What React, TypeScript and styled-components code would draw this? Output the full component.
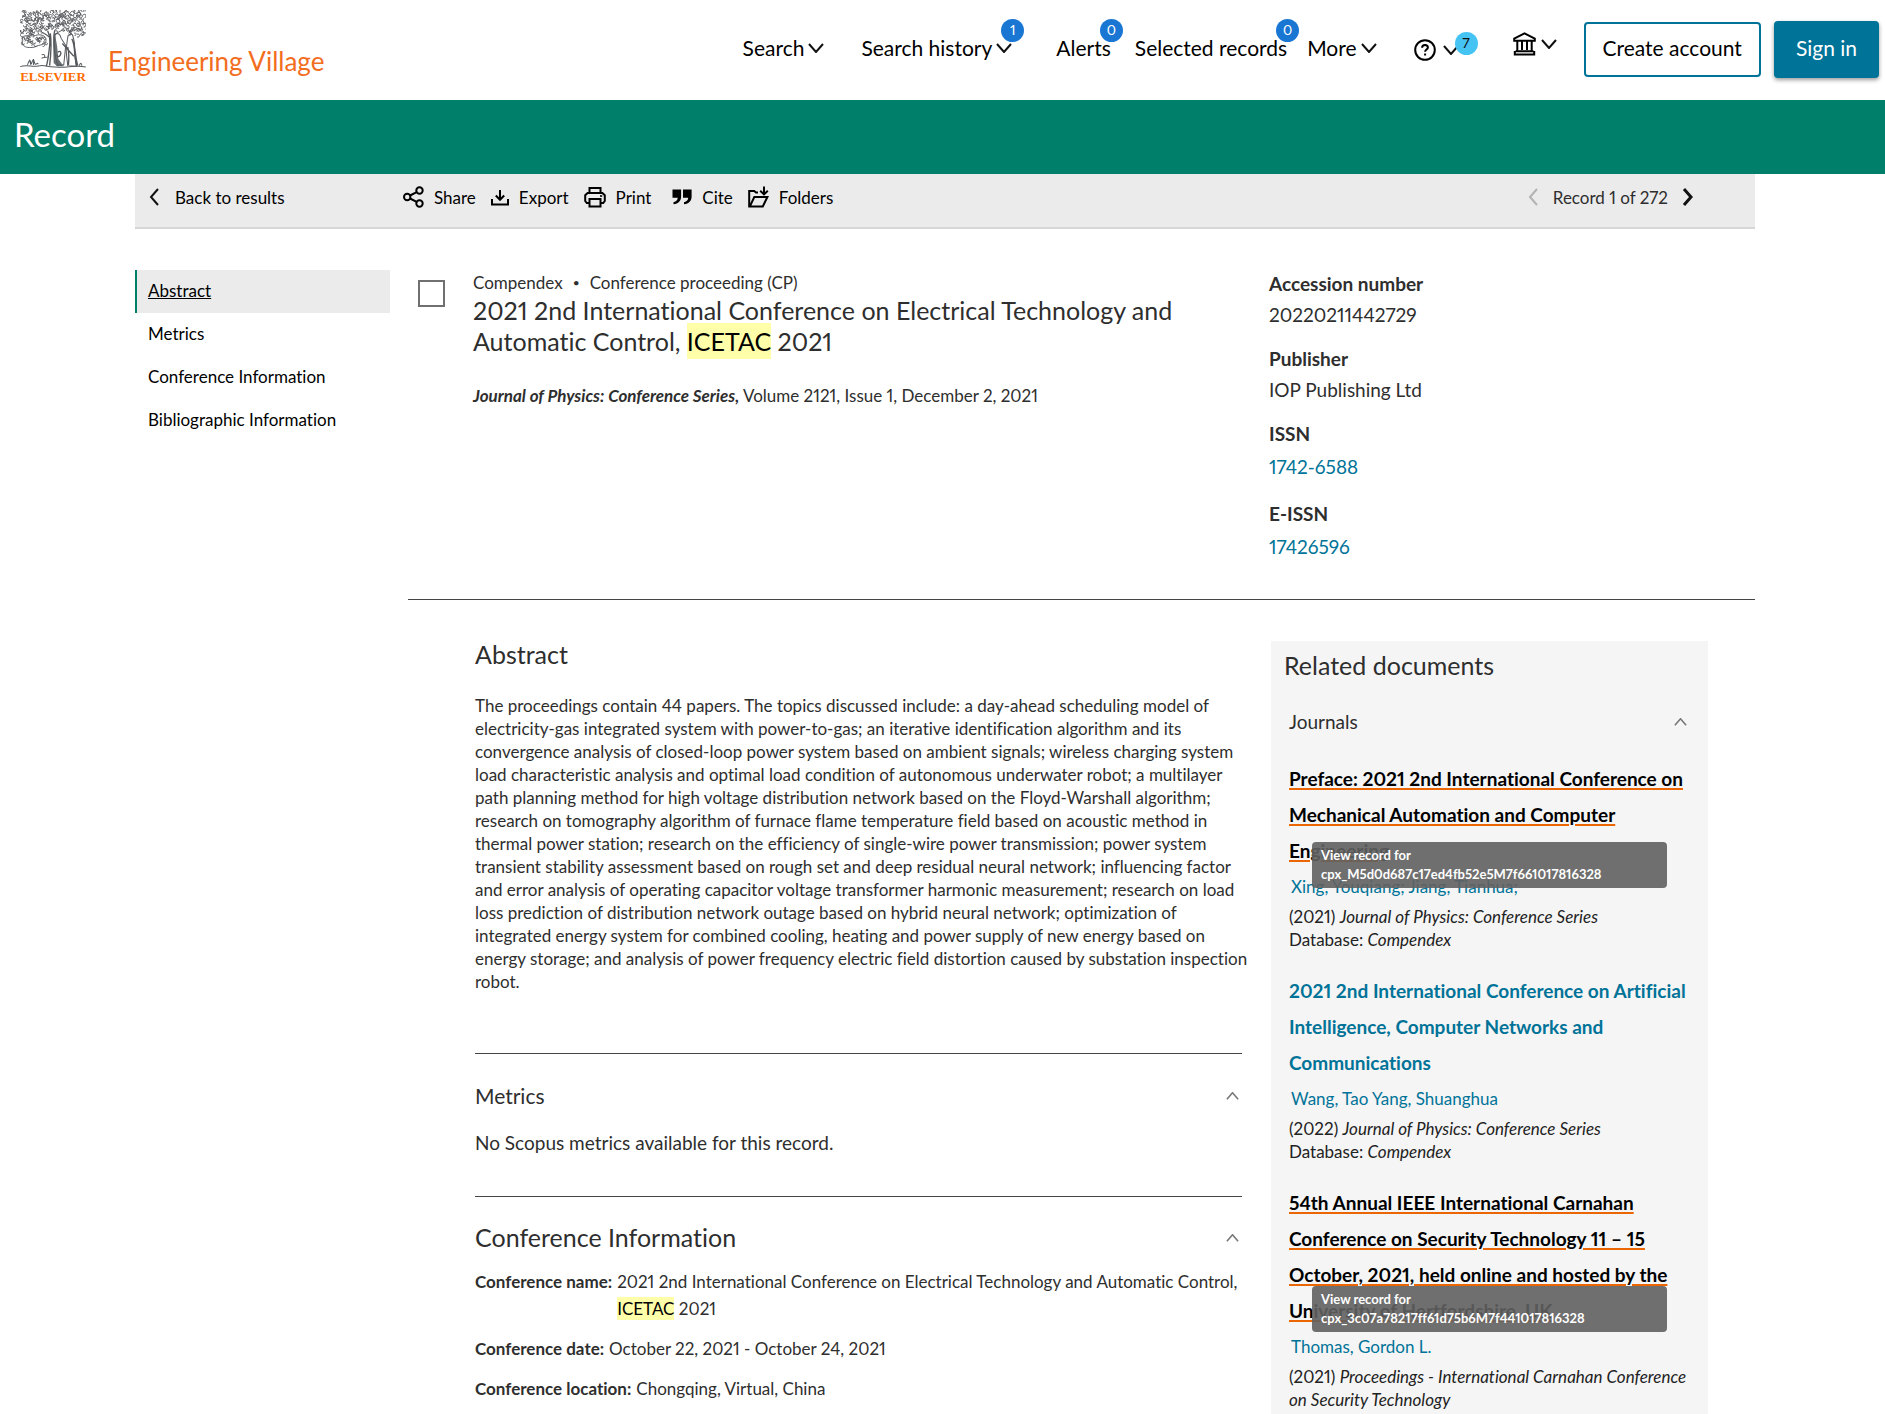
import React from "react";
import styled, { createGlobalStyle, css } from "styled-components";

const GlobalStyle = createGlobalStyle`
  *, *::before, *::after { box-sizing: border-box; }
  body {
    margin: 0;
    background: #fff;
    color: #2e2e2e;
    font: 17px/23px Lato, "Noto Sans", sans-serif;
    font-variant-ligatures: no-common-ligatures;
    font-variant-numeric: proportional-nums;
  }
  h1, h2, h3, p, ul, ol, dl, dd { margin: 0; padding: 0; font-weight: 400; }
  ul, ol { list-style: none; }
  button {
    font: inherit;
    font-variant-ligatures: inherit;
    font-variant-numeric: inherit;
    color: inherit;
    background: none;
    border: 0;
    padding: 0;
    cursor: pointer;
  }
  a { color: inherit; text-decoration: none; }
`;

const teal = "#007398";
const green = "#007f6a";

/* ---------- icons ---------- */

type Dir = "down" | "up" | "left" | "right";
const chevronPoints: Record<Dir, string> = {
  down: "1,1 8,9 15,1",
  up: "1,9 8,1 15,9",
  left: "9,1 2,9 9,17",
  right: "2,1 9,9 2,17",
};

function Chevron({ dir, width, color = "#111", stroke = 2 }: { dir: Dir; width: number; color?: string; stroke?: number }) {
  const flat = dir === "down" || dir === "up";
  const [w, h] = flat ? [16, 10] : [11, 18];
  return (
    <svg width={width} height={Math.round((width * h) / w)} viewBox={`0 0 ${w} ${h}`} fill="none" stroke={color} strokeWidth={stroke} aria-hidden>
      <polyline points={chevronPoints[dir]} />
    </svg>
  );
}

const ShareIcon = () => (
  <svg width="21" height="22" viewBox="0 0 21 22" fill="none" stroke="#000" strokeWidth="2" aria-hidden>
    <circle cx="16.5" cy="4.5" r="3.2" />
    <circle cx="4.2" cy="11" r="3.2" />
    <circle cx="16.5" cy="17.5" r="3.2" />
    <path d="M7 9.5l6.7-3.4M7 12.5l6.7 3.4" />
  </svg>
);

const ExportIcon = () => (
  <svg width="18" height="18" viewBox="0 0 18 18" fill="none" stroke="#000" strokeWidth="2" aria-hidden>
    <path d="M1 11v5.5h16V11M9 2v9.5M4.8 7.5L9 11.8l4.2-4.3" />
  </svg>
);

const PrintIcon = () => (
  <svg width="22" height="22" viewBox="0 0 22 22" fill="none" stroke="#000" strokeWidth="2" aria-hidden>
    <path d="M5.5 7V2h11v5M5.5 17H2.8L1.2 15V9.3L3.6 7h14.8l2.4 2.3V15l-1.6 2h-2.7" />
    <path d="M5.5 13h11v7.5h-11z" />
    <path d="M16 10h2.2" strokeWidth="1.6" />
  </svg>
);

const QuoteIcon = () => (
  <svg width="26" height="16" viewBox="-6 0 26 16" fill="#000" aria-hidden>
    <path d="M0.5 0.5h8.6v7.2c0 4-2.6 6.8-7.6 7.6v-2c2.8-.8 4.2-2.4 4.2-4.6H0.5z" />
    <path d="M11 0.5h8.6v7.2c0 4-2.6 6.8-7.6 7.6v-2c2.8-.8 4.2-2.4 4.2-4.6H11z" />
  </svg>
);

const FolderIcon = () => (
  <svg width="21" height="22" viewBox="0 0 21 22" fill="none" stroke="#000" strokeWidth="2" aria-hidden>
    <path d="M10 6.5H8L6.2 5H1.2v15.5h13.6l4.6-9.5H6.3L2 20.2" />
    <path d="M16 0.5v7.5M12.2 4.8l3.8 3.6 3.8-3.6" />
  </svg>
);

const HelpIcon = () => (
  <svg width="22" height="22" viewBox="0 0 22 22" fill="none" stroke="#000" strokeWidth="2" aria-hidden>
    <circle cx="11" cy="11" r="9.8" />
    <path d="M8.1 8.8c0-1.8 1.2-2.9 2.9-2.9s2.9 1 2.9 2.6c0 1.9-2.8 2.2-2.8 4.3M11.1 14.4v2.2" />
  </svg>
);

const InstitutionIcon = () => (
  <svg width="23" height="24" viewBox="0 0 23 24" fill="none" stroke="#000" strokeWidth="2" aria-hidden>
    <path d="M1.2 8.8V6.6L11.5 1.4l10.3 5.2v2.2z" />
    <path d="M4.3 9v11M9 9v9M14 9v9M18.7 9v11M2.6 19.2h17.8M0.8 22.6h21.4M1.8 19v4M21.2 19v4" />
  </svg>
);

/* Foliage strokes come from a fixed sequence so that the tree is the same on each load. */
function foliage(): string {
  let seed = 11;
  const rnd = () => ((seed = (seed * 16807) % 2147483647) / 2147483647);
  const out: string[] = [];
  const curl = (x: number, y: number) => {
    const r = 3 + rnd() * 3;
    const a = rnd() * Math.PI * 2;
    const dx = Math.cos(a) * r * 1.6;
    const dy = Math.sin(a) * r * 1.6;
    out.push(`M${x.toFixed(1)} ${y.toFixed(1)}a${r.toFixed(1)} ${r.toFixed(1)} 0 1 ${rnd() > 0.5 ? 1 : 0} ${dx.toFixed(1)} ${dy.toFixed(1)}`);
  };
  for (let y = 5; y < 72; y += 8)
    for (let x = 6; x < 190; x += 9) {
      if (y > 58 && x > 55 && x < 140) continue;
      curl(x + rnd() * 5, y + rnd() * 4);
    }
  for (let x = 10; x < 76; x += 9) for (let y = 80; y < 104; y += 9) curl(x + rnd() * 3, y + rnd() * 3);
  return out.join("");
}

const TreeDrawing = () => (
  <svg width="66" height="59" viewBox="0 0 196 176" fill="none" stroke="#54585c" strokeWidth="2.8" aria-hidden>
    <path d={foliage()} />
    <path d="M6 82c8-10 30-2 40-6s26-2 30 8-2 18-14 20-16 8-30 8-20-2-24-10 0-14-2-20z" />
    <path d="M82 62c6 14 8 26 6 44s-4 42-10 62M104 60c-6 14-4 28-2 48s2 36 8 58M90 70c4 26 2 60-2 96" strokeWidth="4" />
    <path d="M86 80c-8-8-14-10-22-14M102 76c8-10 16-12 24-16M64 134c8-4 12 2 8 8M82 140c-6 4-14 0-18 4" strokeWidth="3" />
    <path d="M104 72l-6 20 2 66 10 10h20l-16-22-4-40z" fill="#6b7075" stroke="none" />
    <path d="M104 72c10-6 16 2 18 12l14 22-6 58h-18c-8-22-12-60-8-92z" strokeWidth="3" />
    <path d="M142 82c0-12 14-14 16-2s6 18 4 34 4 38 6 54l-26-2c-2-22-6-38-4-54s2-20 4-30z" strokeWidth="3" />
    <path d="M154 86c10 14 8 52 14 80M158 92c8 24 6 50 14 74M126 100l34 38M112 126c8-6 12 0 8 8s-8 6-10 0M142 110c4 18 4 34 2 54" strokeWidth="4" />
    <path d="M0 169c20-8 36 2 54-2s24 2 36 2 30 3 48 1 36-4 58 0M22 164c4-14 8-18 10-6s6-22 10-4 8-2 12 8M28 148l4 16M40 146v18M176 166c4-10 8-8 8 0" strokeWidth="3" />
  </svg>
);

/* ---------- header ---------- */

const Header = styled.header`
  display: flex;
  align-items: center;
  height: 100px;
  padding: 0 6px 0 20px;
  color: #000;
`;

const Brand = styled.a`
  display: flex;
  align-self: flex-start;
  gap: 22px;
  padding-top: 10px;
  color: #f36d21;
  font-size: 26px;
  line-height: 32px;
`;

const Publisher = styled.span`
  display: flex;
  flex-direction: column;
  align-items: center;
  gap: 1px;
  color: #ff6c00;
  font: 700 13px/14px "Liberation Serif", serif;
`;

const BrandName = styled.span`
  padding-top: 35px;
`;

const Nav = styled.nav`
  display: flex;
  align-items: center;
  margin-left: auto;
  font-size: 21px;
  line-height: 28px;
`;

const NavButton = styled.button<{ $after: number; $gap?: number; $lift?: number }>`
  position: relative;
  display: flex;
  align-items: center;
  gap: ${(p) => p.$gap ?? 4}px;
  margin-right: ${(p) => p.$after}px;
  margin-bottom: ${(p) => p.$lift ?? 4}px;
  white-space: nowrap;
`;

const Badge = styled.span<{ $light?: boolean }>`
  position: absolute;
  top: ${(p) => (p.$light ? -7 : -15)}px;
  right: ${(p) => (p.$light ? -19 : -12)}px;
  width: 23px;
  height: 23px;
  border-radius: 50%;
  background: ${(p) => (p.$light ? "#45c4f3" : "#1976d2")};
  color: ${(p) => (p.$light ? "#111" : "#fff")};
  font-size: 14px;
  line-height: 22px;
  text-align: center;
`;

const HeaderButton = styled.button<{ $primary?: boolean }>`
  margin-bottom: 2px;
  border-radius: 4px;
  white-space: nowrap;
  ${(p) =>
    p.$primary
      ? css`
          height: 57px;
          padding: 0 22px 3px;
          margin-left: 13px;
          background: ${teal};
          color: #fff;
          box-shadow: 0 2px 4px rgba(0, 0, 0, 0.4);
        `
      : css`
          height: 55px;
          padding: 0 17px 3px;
          border: 2px solid ${teal};
        `}
`;

const TitleBar = styled.div`
  height: 74px;
  padding: 12px 14px;
  background: ${green};
  color: #fff;

  h1 {
    font-size: 33px;
    line-height: 44px;
  }
`;

/* ---------- page frame ---------- */

const Page = styled.div`
  display: flex;
  flex-direction: column;
  min-height: 100vh;
`;

const Frame = styled.div`
  display: flex;
  flex-direction: column;
  flex: 1;
  margin: 0 130px 0 135px;
`;

const Toolbar = styled.div`
  display: flex;
  height: 55px;
  padding: 0 62px 7px 14px;
  border-bottom: 2px solid #d6d6d6;
  background: #ebebeb;
  color: #000;
`;

const BackSlot = styled.div`
  display: flex;
  width: 254px;
`;

const Tools = styled.div`
  display: flex;
  gap: 15px;
`;

const ToolButton = styled.button<{ $gap?: number }>`
  display: flex;
  align-items: center;
  gap: ${(p) => p.$gap ?? 10}px;
`;

const Pager = styled.div`
  display: flex;
  align-items: center;
  gap: 14px;
  margin-left: auto;
  color: #2e2e2e;
`;

const PagerButton = styled.button`
  display: flex;
`;

const Columns = styled.div`
  display: grid;
  grid-template-columns: 255px minmax(0, 1fr);
  column-gap: 18px;
  flex: 1;
`;

const SideNav = styled.nav`
  padding-top: 41px;
`;

const SideLink = styled.a<{ $active?: boolean }>`
  display: block;
  padding: 9px 11px 11px;
  border-left: 2px solid ${(p) => (p.$active ? green : "transparent")};
  background: ${(p) => (p.$active ? "#ebebeb" : "transparent")};
  color: #000;
  text-decoration: ${(p) => (p.$active ? "underline" : "none")};
`;

const Main = styled.main`
  display: flex;
  flex-direction: column;
`;

/* ---------- record summary ---------- */

const Summary = styled.section`
  display: grid;
  grid-template-columns: 27px minmax(0, 1fr) 486px;
  column-gap: 28px;
  padding: 39px 0 34px 10px;
  border-bottom: 1px solid #444;
`;

const Tick = styled.input`
  appearance: none;
  width: 27px;
  height: 27px;
  margin: 12px 0 0;
  border: 2px solid #707070;
  background: #fff;
`;

const SummaryText = styled.div`
  padding: 3px 60px 0 0;
  line-height: 24px;
`;

const Kinds = styled.p`
  display: flex;
  gap: 10px;
`;

const Dot = styled.span`
  font-size: 12px;
`;

const RecordTitle = styled.h2`
  font-size: 25px;
  line-height: 31px;
`;

const Mark = styled.mark<{ $tall?: boolean }>`
  padding: ${(p) => (p.$tall ? 3 : 1)}px 0;
  background: #ffffaa;
  color: #000;
`;

const Source = styled.p`
  margin-top: 27px;
`;

const Facts = styled.dl`
  font-size: 19px;
  line-height: 31px;
`;

const FactName = styled.dt`
  font-weight: 700;
`;

const FactValue = styled.dd<{ $link?: boolean }>`
  margin-bottom: 13px;
  ${(p) =>
    p.$link &&
    css`
      color: ${teal};
      line-height: 36px;
    `}
  &:last-child {
    margin-bottom: 0;
  }
`;

/* ---------- record detail ---------- */

const Detail = styled.div`
  display: grid;
  grid-template-columns: minmax(0, 767fr) minmax(0, 437fr);
  column-gap: 29px;
  flex: 1;
  padding: 41px 47px 0 67px;
`;

const Heading = styled.h2`
  padding-bottom: 2px;
  font-size: 25px;
  line-height: 26px;
`;

const SubHeading = styled.h3`
  font-size: 21px;
  line-height: 24px;
`;

const PanelHeading = styled.h3`
  font-size: 19px;
  line-height: 24px;
`;

const Toggle = styled.button`
  display: flex;
  align-items: center;
  justify-content: space-between;
  width: 100%;
  padding-right: 3px;
  text-align: left;
`;

const AbstractBlock = styled.section`
  padding-bottom: 60px;
`;

const AbstractText = styled.p`
  margin: 25px -12px 0 0;
`;

const MetricsBlock = styled.section`
  padding: 30px 0 41px;
  border-top: 1px solid #444;
`;

const MetricsText = styled.p`
  margin-top: 23px;
  font-size: 19px;
  line-height: 24px;
`;

const ConferenceBlock = styled.section`
  padding-top: 27px;
  border-top: 1px solid #444;
`;

const InfoList = styled.dl`
  display: flex;
  flex-direction: column;
  gap: 13px;
  margin: 16px -12px 0 0;
  line-height: 27px;
`;

const InfoRow = styled.div`
  display: flex;
  gap: 5px;

  dt {
    flex: none;
    font-weight: 700;
  }
`;

const Related = styled.aside`
  padding: 11px 18px 0;
  background: #f5f5f5;

  > h2 {
    margin: 0 0 30px -5px;
  }
`;

const DocList = styled.ol`
  display: flex;
  flex-direction: column;
  gap: 22px;
  margin: 27px -8px 0 0;
`;

const Doc = styled.li`
  position: relative;
  color: #222;
`;

const DocTitle = styled.a<{ $hover?: boolean }>`
  color: ${(p) => (p.$hover ? "#000" : teal)};
  font-size: 19px;
  font-weight: 700;
  line-height: 36px;
  ${(p) =>
    p.$hover &&
    css`
      text-decoration: underline 2px #eb6500;
      text-underline-offset: 2px;
    `}
`;

const Authors = styled.p`
  padding-left: 2px;
  color: ${teal};
  line-height: 36px;
`;

const Tip = styled.div<{ $top: number }>`
  position: absolute;
  top: ${(p) => p.$top}px;
  left: 23px;
  right: 31px;
  padding: 4px 9px;
  border-radius: 4px;
  background: rgba(97, 97, 97, 0.9);
  color: #fff;
  font-size: 13px;
  font-weight: 700;
  line-height: 19px;
`;

type RelatedDoc = { title: string; authors: string; year: number; source: string; database?: string; tip?: { id: string; top: number } };

const docs: RelatedDoc[] = [
  {
    title: "Preface: 2021 2nd International Conference on Mechanical Automation and Computer Engineering",
    authors: "Xing, Youqiang; Jiang, Tianhua;",
    year: 2021,
    source: "Journal of Physics: Conference Series",
    database: "Compendex",
    tip: { id: "cpx_M5d0d687c17ed4fb52e5M7f661017816328", top: 81 },
  },
  {
    title: "2021 2nd International Conference on Artificial Intelligence, Computer Networks and Communications",
    authors: "Wang, Tao Yang, Shuanghua",
    year: 2022,
    source: "Journal of Physics: Conference Series",
    database: "Compendex",
  },
  {
    title: "54th Annual IEEE International Carnahan Conference on Security Technology 11 – 15 October, 2021, held online and hosted by the University of Hertfordshire, UK",
    authors: "Thomas, Gordon L.",
    year: 2021,
    source: "Proceedings - International Carnahan Conference on Security Technology",
    tip: { id: "cpx_3c07a78217ff61d75b6M7f441017816328", top: 101 },
  },
];

const abstractText =
  "The proceedings contain 44 papers. The topics discussed include: a day-ahead scheduling model of electricity-gas integrated system with power-to-gas; an iterative identification algorithm and its convergence analysis of closed-loop power system based on ambient signals; wireless charging system load characteristic analysis and optimal load condition of autonomous underwater robot; a multilayer path planning method for high voltage distribution network based on the Floyd-Warshall algorithm; research on tomography algorithm of furnace flame temperature field based on acoustic method in thermal power station; research on the efficiency of single-wire power transmission; power system transient stability assessment based on rough set and deep residual neural network; influencing factor and error analysis of operating capacitor voltage transformer harmonic measurement; research on load loss prediction of distribution network outage based on hybrid neural network; optimization of integrated energy system for combined cooling, heating and power supply of new energy based on energy storage; and analysis of power frequency electric field distortion caused by substation inspection robot.";

export default function App() {
  return (
    <Page>
      <GlobalStyle />
      <Header>
        <Brand href="#home">
          <Publisher>
            <TreeDrawing />
            ELSEVIER
          </Publisher>
          <BrandName>Engineering Village</BrandName>
        </Brand>
        <Nav aria-label="Main">
          <NavButton $after={37}>
            Search <Chevron dir="down" width={16} />
          </NavButton>
          <NavButton $after={44}>
            Search history <Chevron dir="down" width={16} />
            <Badge>1</Badge>
          </NavButton>
          <NavButton $after={24}>
            Alerts <Badge>0</Badge>
          </NavButton>
          <NavButton $after={20}>
            Selected records <Badge>0</Badge>
          </NavButton>
          <NavButton $after={37}>
            More <Chevron dir="down" width={16} />
          </NavButton>
          <NavButton $after={54} $gap={7} $lift={0} aria-label="Help">
            <HelpIcon />
            <Chevron dir="down" width={16} />
            <Badge $light>7</Badge>
          </NavButton>
          <NavButton $after={27} $gap={5} $lift={12} aria-label="Institution">
            <InstitutionIcon />
            <Chevron dir="down" width={16} />
          </NavButton>
          <HeaderButton>Create account</HeaderButton>
          <HeaderButton $primary>Sign in</HeaderButton>
        </Nav>
      </Header>
      <TitleBar>
        <h1>Record</h1>
      </TitleBar>
      <Frame>
        <Toolbar>
          <BackSlot>
            <ToolButton $gap={15}>
              <Chevron dir="left" width={11} />
              Back to results
            </ToolButton>
          </BackSlot>
          <Tools>
            <ToolButton><ShareIcon />Share</ToolButton>
            <ToolButton><ExportIcon />Export</ToolButton>
            <ToolButton><PrintIcon />Print</ToolButton>
            <ToolButton><QuoteIcon />Cite</ToolButton>
            <ToolButton><FolderIcon />Folders</ToolButton>
          </Tools>
          <Pager>
            <PagerButton aria-label="Previous record" disabled>
              <Chevron dir="left" width={11} color="#b3b3b3" />
            </PagerButton>
            Record 1 of 272
            <PagerButton aria-label="Next record">
              <Chevron dir="right" width={11} stroke={3} />
            </PagerButton>
          </Pager>
        </Toolbar>
        <Columns>
          <SideNav aria-label="Sections">
            <SideLink href="#abstract" $active>Abstract</SideLink>
            <SideLink href="#metrics">Metrics</SideLink>
            <SideLink href="#conference">Conference Information</SideLink>
            <SideLink href="#bibliographic">Bibliographic Information</SideLink>
          </SideNav>
          <Main>
            <Summary>
              <Tick type="checkbox" aria-label="Select record" />
              <SummaryText>
                <Kinds>
                  <span>Compendex</span>
                  <Dot>•</Dot>
                  <span>Conference proceeding (CP)</span>
                </Kinds>
                <RecordTitle>
                  2021 2nd International Conference on Electrical Technology and Automatic Control, <Mark $tall>ICETAC</Mark> 2021
                </RecordTitle>
                <Source>
                  <b><i>Journal of Physics: Conference Series,</i></b> Volume 2121, Issue 1, December 2, 2021
                </Source>
              </SummaryText>
              <Facts>
                <FactName>Accession number</FactName>
                <FactValue>20220211442729</FactValue>
                <FactName>Publisher</FactName>
                <FactValue>IOP Publishing Ltd</FactValue>
                <FactName>ISSN</FactName>
                <FactValue $link><a href="#issn">1742-6588</a></FactValue>
                <FactName>E-ISSN</FactName>
                <FactValue $link><a href="#eissn">17426596</a></FactValue>
              </Facts>
            </Summary>
            <Detail>
              <div>
                <AbstractBlock id="abstract">
                  <Heading>Abstract</Heading>
                  <AbstractText>{abstractText}</AbstractText>
                </AbstractBlock>
                <MetricsBlock id="metrics">
                  <Toggle>
                    <SubHeading as="span">Metrics</SubHeading>
                    <Chevron dir="up" width={13} color="#777" />
                  </Toggle>
                  <MetricsText>No Scopus metrics available for this record.</MetricsText>
                </MetricsBlock>
                <ConferenceBlock id="conference">
                  <Toggle>
                    <Heading as="span">Conference Information</Heading>
                    <Chevron dir="up" width={13} color="#777" />
                  </Toggle>
                  <InfoList>
                    <InfoRow>
                      <dt>Conference name:</dt>
                      <dd>
                        2021 2nd International Conference on Electrical Technology and Automatic Control, <Mark>ICETAC</Mark> 2021
                      </dd>
                    </InfoRow>
                    <InfoRow>
                      <dt>Conference date:</dt>
                      <dd>October 22, 2021 - October 24, 2021</dd>
                    </InfoRow>
                    <InfoRow>
                      <dt>Conference location:</dt>
                      <dd>Chongqing, Virtual, China</dd>
                    </InfoRow>
                  </InfoList>
                </ConferenceBlock>
              </div>
              <Related>
                <Heading>Related documents</Heading>
                <Toggle>
                  <PanelHeading as="span">Journals</PanelHeading>
                  <Chevron dir="up" width={13} color="#777" />
                </Toggle>
                <DocList>
                  {docs.map((d) => (
                    <Doc key={d.title}>
                      <DocTitle href="#doc" $hover={!!d.tip}>{d.title}</DocTitle>
                      <Authors><a href="#authors">{d.authors}</a></Authors>
                      <p>({d.year}) <i>{d.source}</i></p>
                      {d.database && <p>Database: <i>{d.database}</i></p>}
                      {d.tip && (
                        <Tip role="tooltip" $top={d.tip.top}>
                          View record for
                          <br />
                          {d.tip.id}
                        </Tip>
                      )}
                    </Doc>
                  ))}
                </DocList>
              </Related>
            </Detail>
          </Main>
        </Columns>
      </Frame>
    </Page>
  );
}
